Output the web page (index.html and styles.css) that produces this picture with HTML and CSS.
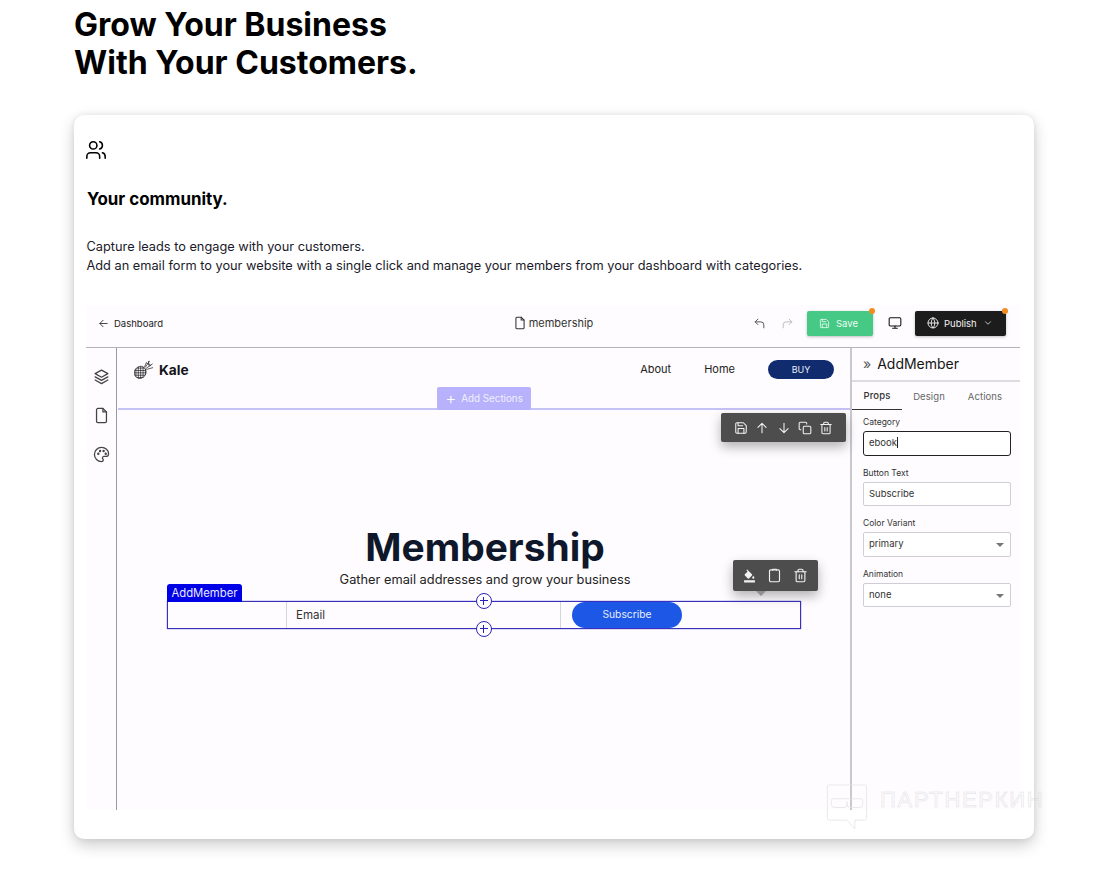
FILE: index.html
```html
<!DOCTYPE html>
<html lang="en">
<head>
<meta charset="utf-8">
<title>Grow Your Business</title>
<link rel="stylesheet" href="styles.css">
</head>
<body>
<svg class="defs" width="0" height="0" aria-hidden="true">
  <symbol id="i-save" viewBox="0 0 24 24"><path d="M5 3h11l5 5v11a2 2 0 0 1-2 2H5a2 2 0 0 1-2-2V5a2 2 0 0 1 2-2z"/><path d="M17 21v-8H7v8"/><path d="M7 3v5h8"/></symbol>
  <symbol id="i-file" viewBox="0 0 24 24"><path d="M14 2H7a2 2 0 0 0-2 2v16a2 2 0 0 0 2 2h10a2 2 0 0 0 2-2V7z"/><path d="M14 2v5h5"/></symbol>
  <symbol id="i-trash" viewBox="0 0 24 24"><path d="M3 6h18"/><path d="M19 6v14a2 2 0 0 1-2 2H7a2 2 0 0 1-2-2V6"/><path d="M8 6V4a2 2 0 0 1 2-2h4a2 2 0 0 1 2 2v2"/><path d="M10 11v6M14 11v6"/></symbol>
  <clipPath id="pine-clip"><ellipse cx="6.500" cy="14" rx="6" ry="6.500" transform="rotate(35 6.500 14)"/></clipPath>
</svg>
<main class="page">
  <h1 class="headline">Grow Your Business<br>With Your Customers.</h1>
  <section class="card">
    <svg class="users" viewBox="0 0 24 24"><path d="M16 21v-2a4 4 0 0 0-4-4H6a4 4 0 0 0-4 4v2"/><circle cx="9" cy="7" r="4"/><path d="M22 21v-2a4 4 0 0 0-3-3.87"/><path d="M16 3.13a4 4 0 0 1 0 7.75"/></svg>
    <h2 class="card-title">Your community.</h2>
    <p class="card-text">Capture leads to engage with your customers.<br>Add an email form to your website with a single click and manage your members from your dashboard with categories.</p>

    <div class="app">
      <header class="topbar">
        <div class="back">
          <svg class="ic ic-11" viewBox="0 0 24 24"><path d="M20 12H4M11 5l-7 7 7 7"/></svg>
          <span>Dashboard</span>
        </div>
        <div class="doc">
          <svg class="ic ic-14" viewBox="0 0 24 24"><use href="#i-file"/></svg>
          <span>membership</span>
        </div>
        <div class="actions">
          <svg class="ic ic-13 undo" viewBox="0 0 24 24"><path d="M9 14L4 9l5-5"/><path d="M4 9h10.500a5.500 5.500 0 0 1 5.500 5.500V20"/></svg>
          <svg class="ic ic-13 redo" viewBox="0 0 24 24"><path d="M15 14l5-5-5-5"/><path d="M20 9H9.500A5.500 5.500 0 0 0 4 14.500V20"/></svg>
          <button class="btn btn-save">
            <svg class="ic ic-11" viewBox="0 0 24 24"><use href="#i-save"/></svg>Save
            <span class="dot"></span>
          </button>
          <svg class="ic ic-14 monitor" viewBox="0 0 24 24"><rect x="2" y="3" width="20" height="14" rx="2"/><path d="M8 21h8M12 17v4"/></svg>
          <button class="btn btn-publish">
            <svg class="ic ic-12" viewBox="0 0 24 24"><circle cx="12" cy="12" r="10"/><path d="M2 12h20"/><path d="M12 2a15 15 0 0 1 0 20a15 15 0 0 1 0-20z"/></svg>Publish
            <svg class="ic ic-10 chev" viewBox="0 0 24 24"><path d="M6 9l6 6 6-6"/></svg>
            <span class="dot"></span>
          </button>
        </div>
      </header>

      <div class="workspace">
        <aside class="rail">
          <svg class="ic ic-17" viewBox="0 0 24 24"><path d="M12 3L3 8l9 5 9-5z"/><path d="M3 12.500l9 5 9-5"/><path d="M3 17l9 5 9-5"/></svg>
          <svg class="ic ic-17" viewBox="0 0 24 24"><use href="#i-file"/></svg>
          <svg class="ic ic-17" viewBox="0 0 24 24"><path d="M12 2a10 10 0 0 0 0 20c1.600 0 2.500-1 2.500-2.200 0-.6-.3-1.100-.6-1.500-.4-.4-.6-.9-.6-1.500 0-1.200 1-2 2.200-2H18a4 4 0 0 0 4-4c0-4.800-4.500-8.800-10-8.800z"/><circle cx="7.500" cy="11" r=".8"/><circle cx="10" cy="7" r=".8"/><circle cx="15" cy="7" r=".8"/><circle cx="18" cy="11" r=".8"/></svg>
        </aside>

        <div class="canvas">
          <nav class="site-nav">
            <div class="brand">
              <svg class="pine" viewBox="0 0 22 22">
                <g clip-path="url(#pine-clip)"><path d="M0 9.500h14M0 12h14M0 14.500h14M0 17h14M0 19.500h14M2 7v15M4.500 7v15M7 7v15M9.500 7v15M12 7v15"/></g>
                <ellipse cx="6.500" cy="14" rx="6" ry="6.500" transform="rotate(35 6.500 14)"/>
                <path d="M11 8.500l2-5M11.500 9l5-7M12.500 10l7-5M13 11l7-2M13 4l5 3M15 2l1 6"/>
              </svg>
              <span class="brand-name">Kale</span>
            </div>
            <div class="site-links">
              <a>About</a>
              <a>Home</a>
              <span class="buy">BUY</span>
            </div>
          </nav>
          <div class="add-sections"><span class="plus">+</span>Add Sections</div>

          <div class="float-bar bar-block">
            <svg class="ic ic-14" viewBox="0 0 24 24"><use href="#i-save"/></svg>
            <svg class="ic ic-14" viewBox="0 0 24 24"><path d="M12 20V4M5 11l7-7 7 7"/></svg>
            <svg class="ic ic-14" viewBox="0 0 24 24"><path d="M12 4v16M5 13l7 7 7-7"/></svg>
            <svg class="ic ic-14" viewBox="0 0 24 24"><rect x="9" y="9" width="13" height="13" rx="2"/><path d="M5 15H4a2 2 0 0 1-2-2V4a2 2 0 0 1 2-2h9a2 2 0 0 1 2 2v1"/></svg>
            <svg class="ic ic-14" viewBox="0 0 24 24"><use href="#i-trash"/></svg>
          </div>

          <div class="hero">
            <h3 class="hero-title">Membership</h3>
            <p class="hero-sub">Gather email addresses and grow your business</p>
          </div>

          <div class="form-block">
            <span class="form-tag">AddMember</span>
            <span class="add-dot add-top"></span>
            <span class="add-dot add-bottom"></span>
            <div class="form-spacer"></div>
            <div class="form-email">Email</div>
            <div class="form-action"><span class="subscribe">Subscribe</span></div>
            <div class="float-bar bar-form">
              <svg class="fill" viewBox="0 0 24 24"><path d="M16.560 8.940L7.620 0 6.210 1.410l2.380 2.380-5.150 5.150a1.490 1.490 0 0 0 0 2.120l5.500 5.500c.29.290.68.440 1.060.440s.77-.15 1.060-.44l5.500-5.500c.59-.58.59-1.530 0-2.120zM19 11.500s-2 2.170-2 3.500a2 2 0 0 0 4 0c0-1.330-2-3.500-2-3.500zM2 20h20v4H2z"/></svg>
              <svg class="ic ic-15" viewBox="0 0 24 24"><rect x="4" y="3" width="16" height="19" rx="2"/><path d="M9 3.500V2h6v1.500"/></svg>
              <svg class="ic ic-15" viewBox="0 0 24 24"><use href="#i-trash"/></svg>
            </div>
          </div>
        </div>

        <aside class="panel">
          <div class="panel-head"><span class="chevs">&raquo;</span>AddMember</div>
          <div class="tabs">
            <span class="tab tab-on">Props</span>
            <span class="tab tab-mid">Design</span>
            <span class="tab tab-end">Actions</span>
          </div>
          <div class="fields">
            <div class="field">
              <label class="field-label">Category</label>
              <div class="input input-on">ebook<i class="caret"></i></div>
            </div>
            <div class="field">
              <label class="field-label">Button Text</label>
              <div class="input">Subscribe</div>
            </div>
            <div class="field">
              <label class="field-label">Color Variant</label>
              <div class="input select">primary<i class="arrow"></i></div>
            </div>
            <div class="field">
              <label class="field-label">Animation</label>
              <div class="input select">none<i class="arrow"></i></div>
            </div>
          </div>
        </aside>
      </div>
    </div>
  </section>
</main>
<div class="watermark">
  <svg class="wm-icon" viewBox="0 0 42 48"><path d="M3 1h36a2 2 0 0 1 2 2v32a2 2 0 0 1-2 2H29v9l-8-9H3a2 2 0 0 1-2-2V3a2 2 0 0 1 2-2z"/><path d="M7 15h28a2 2 0 0 1 2 2v4a3 3 0 0 1-3 3H24a3 3 0 0 1-3-3v-3h0v3a3 3 0 0 1-3 3H8a3 3 0 0 1-3-3v-4a2 2 0 0 1 2-2z"/></svg>
  <span class="wm-text">ПАРТНЕРКИН</span>
</div>
</body>
</html>
```
FILE: styles.css
```css
* { box-sizing: border-box; }
html, body { margin: 0; padding: 0; height: 882px; overflow: hidden; background: #fff; }
body { font-family: Inter, "Liberation Sans", sans-serif; color: #000; position: relative; }
.defs { position: absolute; }

.page { padding: 6px 59px 0 74px; }
.headline { margin: 0 0 33px; font-size: 32px; line-height: 38px; font-weight: 700; }

.card { height: 724px; background: #fff; border-radius: 10px; padding: 24px 14px 0 12px; box-shadow: 0 6px 16px rgba(0,0,0,.2), 0 0 6px rgba(0,0,0,.08); }
.users { display: block; width: 22px; height: 22px; margin-left: -1px; fill: none; stroke: #000; stroke-width: 1.700; stroke-linecap: round; stroke-linejoin: round; }
.card-title { margin: 26px 0 0 1px; font-size: 16.900px; line-height: 24px; font-weight: 700; }
.card-text { margin: 26px 0 0 .5px; font-size: 12.770px; line-height: 19px; color: #1a1a2a; }

.ic { display: block; flex: none; fill: none; stroke: currentColor; stroke-width: 1.800; stroke-linecap: round; stroke-linejoin: round; }
.ic-10 { width: 10px; height: 10px; }
.ic-11 { width: 11px; height: 11px; }
.ic-12 { width: 12px; height: 12px; }
.ic-13 { width: 13px; height: 13px; }
.ic-14 { width: 14px; height: 14px; }
.ic-15 { width: 15px; height: 15px; }
.ic-17 { width: 17px; height: 17px; }

.app { margin-top: 30px; height: 505px; background: #fefcfe; display: flex; flex-direction: column; color: #222; }
.topbar { height: 43px; flex: none; display: grid; grid-template-columns: 1fr auto 1fr; align-items: center; padding: 0 14px 6px 12px; border-bottom: 1px solid #b4b2b8; font-size: 10px; }
.back { display: flex; align-items: center; gap: 5px; font-size: 9.500px; }
.doc { display: flex; align-items: center; gap: 2px; font-size: 11px; color: #333; padding-left: 2px; }
.actions { display: flex; align-items: center; justify-content: flex-end; }
.undo { color: #555; }
.redo { color: #bbb; margin-left: 15px; }
.btn { position: relative; display: flex; align-items: center; border: 0; border-radius: 2px; height: 25px; font: inherit; font-size: 9.500px; color: #f4f4f4; padding: 0; box-shadow: 0 1px 3px rgba(0,0,0,.25); }
.btn-save { width: 66px; margin-left: 13px; padding-left: 12px; gap: 6px; background: #47c986; color: #e9fbf1; }
.monitor { margin: 0 13px 0 15px; color: #111; }
.btn-publish { width: 91px; padding-left: 12px; gap: 5px; background: #1c1c1c; }
.chev { margin-left: 1px; }
.dot { position: absolute; top: -3px; right: -2px; width: 6px; height: 6px; border-radius: 50%; background: #f28c1e; }

.workspace { flex: 1; display: grid; grid-template-columns: 31px 735px 168px; min-height: 0; }
.rail { display: flex; flex-direction: column; align-items: center; gap: 22px; padding-top: 20px; border-right: 1px solid #9a98a0; color: #444; }

.canvas { position: relative; border-right: 2px solid #c9c8cc; }
.site-nav { height: 62px; border-bottom: 2px solid #c5c2f5; margin-left: 1px; display: flex; justify-content: space-between; padding: 10px 16px 0 16px; }
.brand { display: flex; align-items: center; align-self: flex-start; gap: 4px; font-size: 13.700px; font-weight: 700; color: #14141c; height: 22px; }
.brand-name { padding-top: 2px; }
.pine { width: 21px; height: 21px; fill: none; stroke: #222; stroke-width: .75; }
.site-links { display: flex; align-items: center; align-self: flex-start; font-size: 11px; height: 22px; color: #222; }
.site-links a:first-child { margin-right: 33px; }
.site-links a:nth-child(2) { margin-right: 33px; }
.buy { width: 66px; height: 19px; border-radius: 10px; background: #112b6f; color: #e8ecf7; font-size: 9px; display: flex; align-items: center; justify-content: center; }
.add-sections { position: absolute; top: 39px; left: 320px; width: 94px; height: 23px; background: #b7b2fb; color: #f1f0ff; border-radius: 2px 2px 0 0; font-size: 9.800px; display: flex; align-items: center; justify-content: center; gap: 5px; }
.plus { font-size: 17px; line-height: 1; font-weight: 300; color: #fff; }

.float-bar { position: absolute; display: flex; align-items: center; background: #4e4d4e; color: #f2f2f2; border-radius: 2px; box-shadow: 0 5px 12px rgba(0,0,0,.3); }
.bar-block { top: 65px; left: 604px; width: 125px; height: 29px; padding: 0 13px; justify-content: space-between; }
.bar-form { top: -42px; left: 565px; width: 85px; height: 31px; padding: 0 10px; justify-content: space-between; }
.bar-form::after { content: ""; position: absolute; left: 23px; bottom: -5px; border: 5px solid transparent; border-bottom: 0; border-top-color: #8f8f8f; }
.fill { width: 13px; height: 14px; fill: #f2f2f2; display: block; }

.hero { text-align: center; padding: 113px 0 0 3px; }
.hero-title { margin: 0; font-size: 38.900px; line-height: 48px; font-weight: 700; color: #0f172a; }
.hero-sub { margin: -1px 0 0; font-size: 12.800px; line-height: 20px; color: #222; }

.form-block { position: relative; margin: 11px 49px 0 50px; height: 28px; border: 1px solid #3a30c0; box-shadow: 0 0 1px #3a30c0; display: grid; grid-template-columns: 119px 274px 1fr; }
.form-tag { position: absolute; top: -18px; left: -1px; height: 18px; width: 75px; background: #0000e6; color: #e8e8ff; border-radius: 3px 3px 0 0; font-size: 11.300px; line-height: 18px; text-align: center; }
.add-dot { position: absolute; left: 308px; width: 16px; height: 16px; border-radius: 50%; background: #fff; border: 1.500px solid #2a22b8; }
.add-dot::before, .add-dot::after { content: ""; position: absolute; background: #2a22b8; }
.add-dot::before { left: 3px; right: 3px; top: 6px; height: 1.200px; }
.add-dot::after { top: 3px; bottom: 3px; left: 6px; width: 1.200px; }
.add-top { top: -9px; }
.add-bottom { bottom: -9px; }
.form-spacer { border-right: 1px solid #d5d4da; }
.form-email { border-right: 1px solid #d5d4da; padding-left: 9px; font-size: 11.500px; line-height: 26px; color: #333; }
.form-action { padding-left: 11px; }
.subscribe { display: flex; align-items: center; justify-content: center; width: 110px; height: 26px; padding-bottom: 2px; border-radius: 13px; background: #1d57e6; color: #e6edfd; font-size: 10.300px; }

.panel { display: flex; flex-direction: column; }
.panel-head { height: 34px; border-bottom: 2px solid #dcdbe0; font-size: 14px; line-height: 32px; padding-left: 11px; color: #151515; }
.chevs { font-size: 14px; color: #555; margin-right: 6px; }
.tabs { display: flex; height: 28px; font-size: 9.500px; color: #666; }
.tab { display: flex; align-items: center; justify-content: center; height: 28px; letter-spacing: .1px; }
.tab-on { width: 50px; color: #333; font-weight: 500; border-bottom: 1px solid #333; }
.tab-mid { width: 54px; }
.tab-end { width: 58px; }
.fields { display: flex; flex-direction: column; gap: 12px; padding: 7px 9px 0 11px; }
.field { display: flex; flex-direction: column; gap: 3px; }
.field-label { font-size: 8.500px; line-height: 11px; color: #333; }
.input { position: relative; height: 24.500px; border: 1px solid #cfced4; border-radius: 2px; background: #fff; padding-left: 5px; font-size: 9.500px; line-height: 22px; color: #333; }
.input-on { border: 1.500px solid #222; border-radius: 3px; }
.caret { display: inline-block; width: 1px; height: 11px; background: #222; vertical-align: -2px; }
.arrow { position: absolute; right: 6px; top: 10px; border: 4px solid transparent; border-bottom: 0; border-top: 4px solid #777; }

.watermark { position: absolute; left: 826px; top: 784px; display: flex; align-items: flex-start; gap: 12px; opacity: .8; }
.wm-icon { width: 42px; height: 47px; fill: none; stroke: #e4e4e6; stroke-width: 1; }
.wm-text { margin-top: 4px; font-family: "Liberation Sans", sans-serif; font-size: 22px; line-height: 24px; letter-spacing: 1.700px; color: transparent; -webkit-text-stroke: .5px #d8d8da; }
```
